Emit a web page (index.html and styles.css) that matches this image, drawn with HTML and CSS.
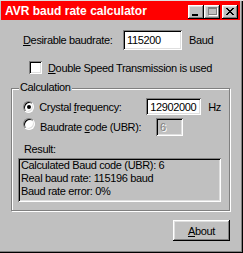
FILE: index.html
```html
<!DOCTYPE html>
<html lang="en">
<head>
  <meta charset="UTF-8" />
  <title>AVR baud rate calculator</title>
  <link rel="stylesheet" href="styles.css">
</head>
<body>

  <div class="window">
    <!-- Title bar -->
    <div class="titlebar">
      <span class="title">AVR baud rate calculator</span>
      <div class="title-buttons">
        <span class="tbtn"><span class="min-bar"></span></span>
        <span class="tbtn"><span class="max-box"></span></span>
        <span class="tbtn close">
          <svg width="8" height="7" viewBox="0 0 8 7" shape-rendering="crispEdges">
            <path d="M0 0h2v1h-2zM6 0h2v1h-2zM1 1h2v1h-2zM5 1h2v1h-2zM2 2h4v1h-4zM3 3h2v1h-2zM2 4h4v1h-4zM1 5h2v1h-2zM5 5h2v1h-2zM0 6h2v1h-2zM6 6h2v1h-2z" fill="#000"/>
          </svg>
        </span>
      </div>
    </div>

    <div class="content">
      <div class="baud-row">
        <label class="baud-label"><u>D</u>esirable baudrate:</label>
        <div class="field baud-field">115200</div>
        <span class="unit">Baud</span>
      </div>

      <div class="check-row">
        <span class="checkbox"></span>
        <span><u>D</u>ouble Speed Transmission is used</span>
      </div>

      <!-- Calculation group -->
      <div class="group">
        <span class="group-title">Calculation</span>

        <div class="radio-row">
          <span class="radio checked"></span>
          <span class="radio-label">Crystal <u>f</u>requency:</span>
          <div class="field freq-field">12902000</div>
          <span class="unit">Hz</span>
        </div>

        <div class="radio-row second">
          <span class="radio"></span>
          <span class="radio-label">Baudrate <u>c</u>ode (UBR):</span>
          <div class="field code-field disabled">6</div>
        </div>

        <div class="result-label">Result:</div>
        <div class="result">
          <div>Calculated Baud code (UBR): 6</div>
          <div>Real baud rate: 115196 baud</div>
          <div>Baud rate error: 0%</div>
        </div>
      </div>

      <div class="actions">
        <button class="btn"><u>A</u>bout</button>
      </div>
    </div>
  </div>

</body>
</html>
```
FILE: styles.css
```css
:root {
  --face: #c0c0c0;
  --light: #dfdfdf;
  --shadow: #808080;
  --title: #ff0000;
}

* {
  margin: 0;
  padding: 0;
  box-sizing: border-box;
  font-family: 'Liberation Sans', Arial, sans-serif;
}

body {
  background: var(--face);
  font-size: 11px;
  letter-spacing: -0.35px;
  color: #000;
}

u {
  text-decoration: underline;
  text-underline-offset: 1px;
}

.window {
  width: 243px;
  height: 253px;
  padding: 1px 3px 3px 1px;
  background: var(--face);
  box-shadow: inset 0 1px var(--light), inset -1px -1px #000, inset -2px -2px var(--shadow);
  display: flex;
  flex-direction: column;
}

.titlebar {
  height: 19px;
  background: var(--title);
  color: white;
  display: flex;
  align-items: center;
  justify-content: space-between;
  padding: 0 2px 0 4px;
}

.title {
  font-weight: bold;
  font-size: 12px;
  letter-spacing: 0;
}

.title-buttons {
  display: flex;
  margin-top: 2px;
}

.tbtn {
  width: 16px;
  height: 14px;
  background: var(--face);
  box-shadow: inset -1px -1px #000, inset 1px 1px #fff, inset -2px -2px var(--shadow), inset 2px 2px var(--light);
  display: flex;
  align-items: center;
  justify-content: center;
}

.tbtn.close {
  margin-left: 2px;
}

.min-bar {
  width: 6px;
  height: 2px;
  background: #000;
  margin: 6px 2px 0 0;
}

.max-box {
  width: 9px;
  height: 8px;
  border: 1px solid var(--shadow);
  border-top-width: 2px;
  box-shadow: 1px 1px #fff;
  margin-bottom: 1px;
}

.content {
  flex: 1;
  padding: 10px 10px 0 10px;
  display: flex;
  flex-direction: column;
}

.field {
  background: white;
  box-shadow: inset 1px 1px var(--shadow), inset -1px -1px #fff, inset 2px 2px #000, inset -2px -2px var(--light);
  padding: 0 4px;
  display: flex;
  align-items: center;
}

.field.disabled {
  background: var(--face);
  color: var(--shadow);
  text-shadow: 1px 1px #fff;
}

.baud-row {
  display: flex;
  align-items: center;
  height: 20px;
  padding-left: 12px;
}

.baud-label {
  width: 100px;
}

.baud-field {
  width: 59px;
  height: 20px;
}

.unit {
  margin-left: 7px;
}

.check-row {
  display: flex;
  align-items: center;
  gap: 6px;
  margin-top: 11px;
  padding-left: 18px;
  height: 13px;
}

.checkbox {
  width: 13px;
  height: 13px;
  background: white;
  box-shadow: inset 1px 1px var(--shadow), inset -1px -1px #fff, inset 2px 2px #000, inset -2px -2px var(--light);
}

.group {
  position: relative;
  margin-top: 14px;
  border: 1px solid var(--shadow);
  box-shadow: inset 1px 1px #fff, 1px 1px #fff;
  padding: 9px 8px 8px 6px;
}

.group-title {
  position: absolute;
  top: -8px;
  left: 7px;
  padding: 0 1px;
  line-height: 13px;
  background: var(--face);
}

.radio-row {
  display: flex;
  align-items: center;
  height: 17px;
  padding-left: 5px;
}

.radio-row.second {
  margin-top: 3px;
}

.radio-row.second .radio {
  margin-top: -5px;
}

.radio {
  width: 12px;
  height: 12px;
  border-radius: 50%;
  background: white;
  border: 1px solid;
  border-color: var(--shadow) #fff #fff var(--shadow);
  box-shadow: inset 1px 1px #000, inset -1px -1px var(--light);
  display: flex;
  align-items: center;
  justify-content: center;
}

.radio.checked::after {
  content: "";
  width: 4px;
  height: 4px;
  border-radius: 50%;
  background: #000;
}

.radio-label {
  width: 116px;
  margin-left: 5px;
}

.freq-field {
  width: 59px;
  height: 17px;
}

.code-field {
  width: 27px;
  height: 18px;
}

.result-label {
  margin-top: 8px;
  margin-left: 6px;
  line-height: 13px;
}

.result {
  margin-top: 2px;
  height: 44px;
  padding: 1px 3px 0;
  line-height: 13px;
  box-shadow: inset 1px 1px var(--shadow), inset -1px -1px #fff, inset 2px 2px #000, inset -2px -2px var(--light);
}

.actions {
  display: flex;
  justify-content: flex-end;
  margin-top: 9px;
}

.btn {
  width: 57px;
  height: 21px;
  border: none;
  background: var(--face);
  font-size: 11px;
  letter-spacing: -0.35px;
  box-shadow: inset -1px -1px #000, inset 1px 1px #fff, inset -2px -2px var(--shadow), inset 2px 2px var(--light);
}
```
